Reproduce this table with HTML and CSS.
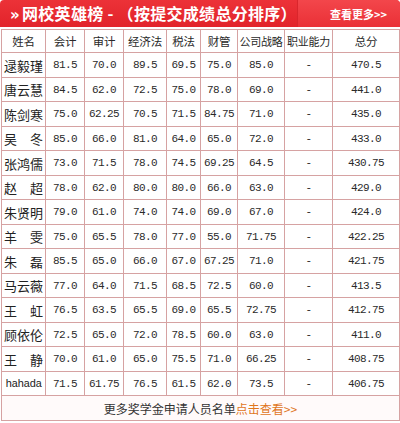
FILE: index.html
```html
<!DOCTYPE html>
<html lang="zh-CN">
<head>
<meta charset="utf-8">
<title>网校英雄榜</title>
<link rel="stylesheet" href="styles.css">
</head>
<body>
<div class="box">
  <div class="head">
    <div class="title"><span class="raquo">»</span>网校英雄榜 - （按提交成绩总分排序）</div>
    <a class="more" href="#">查看更多&gt;&gt;</a>
  </div>
  <table class="rank">
    <colgroup>
      <col class="c1"><col class="c2"><col class="c3"><col class="c4"><col class="c5"><col class="c6"><col class="c7"><col class="c8"><col class="c9">
    </colgroup>
    <thead>
      <tr class="hr"><th>姓名</th><th>会计</th><th>审计</th><th>经济法</th><th>税法</th><th>财管</th><th class="tight">公司战略</th><th class="tight">职业能力</th><th>总分</th></tr>
    </thead>
    <tbody>
      <tr class="a"><td class="n">逯毅瑾</td><td>81.5</td><td>70.0</td><td>89.5</td><td>69.5</td><td>75.0</td><td>85.0</td><td>-</td><td>470.5</td></tr>
      <tr class="b"><td class="n">唐云慧</td><td>84.5</td><td>62.0</td><td>72.5</td><td>75.0</td><td>78.0</td><td>69.0</td><td>-</td><td>441.0</td></tr>
      <tr class="a"><td class="n">陈剑寒</td><td>75.0</td><td>62.25</td><td>70.5</td><td>71.5</td><td>84.75</td><td>71.0</td><td>-</td><td>435.0</td></tr>
      <tr class="b"><td class="n">吴　冬</td><td>85.0</td><td>66.0</td><td>81.0</td><td>64.0</td><td>65.0</td><td>72.0</td><td>-</td><td>433.0</td></tr>
      <tr class="a"><td class="n">张鸿儒</td><td>73.0</td><td>71.5</td><td>78.0</td><td>74.5</td><td>69.25</td><td>64.5</td><td>-</td><td>430.75</td></tr>
      <tr class="b"><td class="n">赵　超</td><td>78.0</td><td>62.0</td><td>80.0</td><td>80.0</td><td>66.0</td><td>63.0</td><td>-</td><td>429.0</td></tr>
      <tr class="a"><td class="n">朱贤明</td><td>79.0</td><td>61.0</td><td>74.0</td><td>74.0</td><td>69.0</td><td>67.0</td><td>-</td><td>424.0</td></tr>
      <tr class="b"><td class="n">羊　雯</td><td>75.0</td><td>65.5</td><td>78.0</td><td>77.0</td><td>55.0</td><td>71.75</td><td>-</td><td>422.25</td></tr>
      <tr class="a"><td class="n">朱　磊</td><td>85.5</td><td>65.0</td><td>66.0</td><td>67.0</td><td>67.25</td><td>71.0</td><td>-</td><td>421.75</td></tr>
      <tr class="b"><td class="n">马云薇</td><td>77.0</td><td>64.0</td><td>71.5</td><td>68.5</td><td>72.5</td><td>60.0</td><td>-</td><td>413.5</td></tr>
      <tr class="a"><td class="n">王　虹</td><td>76.5</td><td>63.5</td><td>65.5</td><td>69.0</td><td>65.5</td><td>72.75</td><td>-</td><td>412.75</td></tr>
      <tr class="b"><td class="n">顾依伦</td><td>72.5</td><td>65.0</td><td>72.0</td><td>78.5</td><td>60.0</td><td>63.0</td><td>-</td><td>411.0</td></tr>
      <tr class="a"><td class="n">王　静</td><td>70.0</td><td>61.0</td><td>65.0</td><td>75.5</td><td>71.0</td><td>66.25</td><td>-</td><td>408.75</td></tr>
      <tr class="b"><td class="n en">hahada</td><td>71.5</td><td>61.75</td><td>76.5</td><td>61.5</td><td>62.0</td><td>73.5</td><td>-</td><td>406.75</td></tr>
      <tr class="ft"><td colspan="9">更多奖学金申请人员名单<a href="#">点击查看&gt;&gt;</a></td></tr>
    </tbody>
  </table>
</div>
</body>
</html>
```
FILE: styles.css
```css
html, body {
  margin: 0;
  padding: 0;
  background: #fff;
}
.box {
  width: 400px;
  font-family: "Noto Sans CJK SC", sans-serif;
}
.head {
  height: 27px;
  display: flex;
  align-items: center;
  justify-content: space-between;
  background: linear-gradient(#ec3238, #e2232a);
  border-radius: 4px 4px 0 0;
  overflow: hidden;
}
.title {
  color: #fff;
  font-weight: bold;
  font-size: 16px;
  line-height: 28px;
  padding-left: 10px;
  letter-spacing: 0.3px;
  white-space: nowrap;
}
.raquo {
  font-family: "DejaVu Sans", sans-serif;
  font-size: 15px;
  margin-right: 2px;
}
.more {
  height: 27px;
  line-height: 28px;
  width: 108px;
  box-sizing: border-box;
  padding-left: 32px;
  color: #fff;
  font-size: 11px;
  font-weight: bold;
  text-decoration: none;
  background: linear-gradient(#f3464b, #ea3036);
  border-left: 1px solid #d9262c;
  border-radius: 0 4px 0 0;
}
.rank {
  margin: 2px 0 0 1px;
  width: 399px;
  table-layout: fixed;
  border-collapse: separate;
  border-spacing: 0;
  border-left: 1px solid #d6a2a2;
  border-top: 1px solid #d6a2a2;
}
.c1 { width: 44px; }
.c2 { width: 39px; }
.c3 { width: 39px; }
.c4 { width: 43px; }
.c5 { width: 34px; }
.c6 { width: 37px; }
.c7 { width: 47px; }
.c8 { width: 48px; }
.c9 { width: 67px; }
.rank th, .rank td {
  padding: 0;
  border-right: 1px solid #d6a2a2;
  border-bottom: 1px solid #d6a2a2;
  text-align: center;
  white-space: nowrap;
  overflow: hidden;
  color: #2a2a2a;
}
.rank th {
  font-weight: normal;
  font-size: 11.5px;
  letter-spacing: -0.2px;
}
.rank th.tight {
  font-size: 11px;
  letter-spacing: -0.3px;
}
.hr { height: 23px; }
.a { height: 25px; }
.b { height: 24px; }
.rank td {
  font-family: "Liberation Mono", monospace;
  font-size: 11px;
  letter-spacing: -0.6px;
}
.rank td.n {
  font-family: "Noto Sans CJK SC", sans-serif;
  font-size: 13px;
  letter-spacing: 0;
  color: #222;
}
.rank td.en {
  font-family: "Liberation Mono", monospace;
  font-size: 11px;
  letter-spacing: -0.6px;
}
.ft { height: 25px; }
.rank .ft td {
  font-family: "Noto Sans CJK SC", sans-serif;
  font-size: 12px;
  letter-spacing: 0;
  color: #333;
  background: #fffafa;
}
.ft a {
  color: #e0761c;
  text-decoration: none;
}
```
